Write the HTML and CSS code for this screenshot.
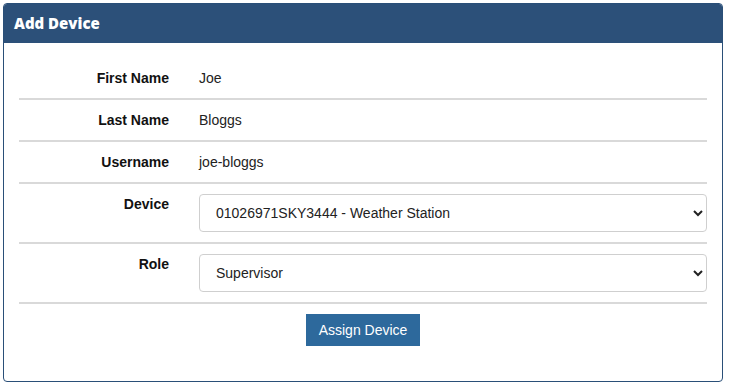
FILE: index.html
```html
<!DOCTYPE html>
<html lang="en">
<head>
    <meta charset="UTF-8">
    <meta name="viewport" content="width=device-width, initial-scale=1.0">
    <title>Add Device</title>
    <link rel="stylesheet" href="styles.css">
</head>
<body>
    <div class="card">
        <div class="card-header">Add Device</div>
        <div class="card-body">
            <form class="device-form">
                <div class="form-row">
                    <label class="form-label">First Name</label>
                    <div class="form-value">Joe</div>
                </div>
                <div class="form-row">
                    <label class="form-label">Last Name</label>
                    <div class="form-value">Bloggs</div>
                </div>
                <div class="form-row">
                    <label class="form-label">Username</label>
                    <div class="form-value">joe-bloggs</div>
                </div>
                <div class="form-row">
                    <label class="form-label" for="device">Device</label>
                    <div class="form-value">
                        <select id="device" class="form-select">
                            <option>01026971SKY3444 - Weather Station</option>
                        </select>
                    </div>
                </div>
                <div class="form-row">
                    <label class="form-label" for="role">Role</label>
                    <div class="form-value">
                        <select id="role" class="form-select">
                            <option>Supervisor</option>
                        </select>
                    </div>
                </div>
                <div class="form-actions">
                    <button type="button" class="btn-primary">Assign Device</button>
                </div>
            </form>
        </div>
    </div>
</body>
</html>
```

FILE: styles.css
```css
body {
    margin: 0;
    padding: 3px;
    background: #ffffff;
    font-family: "Liberation Sans", Arial, sans-serif;
    font-size: 14px;
    color: #222;
}

.card {
    width: 718px;
    border: 1px solid #2a4f78;
    border-radius: 4px;
    overflow: hidden;
}

.card-header {
    height: 39px;
    line-height: 39px;
    padding-left: 10px;
    background-color: #2c5079;
    color: #ffffff;
    font-family: "Open Sans", sans-serif;
    font-weight: 800;
    font-size: 15px;
}

.card-body {
    padding: 15px 15px 35px;
}

.form-row {
    display: flex;
    align-items: flex-start;
    padding: 10px 0;
    border-bottom: 2px solid #d9d9d9;
    line-height: 20px;
}

.form-label {
    width: 150px;
    text-align: right;
    font-weight: 700;
    color: #111;
}

.form-value {
    flex: 1;
    margin-left: 30px;
    color: #222;
}

.form-select {
    width: 100%;
    height: 38px;
    padding: 0 12px;
    border: 1px solid #cfcfcf;
    border-radius: 4px;
    background-color: #ffffff;
    font-family: "Liberation Sans", Arial, sans-serif;
    font-size: 14px;
    color: #222;
}

.form-actions {
    display: flex;
    justify-content: center;
    padding-top: 10px;
}

.btn-primary {
    height: 32px;
    padding: 0 13px;
    border: none;
    background-color: #2d699c;
    color: #ffffff;
    font-family: "Liberation Sans", Arial, sans-serif;
    font-size: 14px;
    cursor: pointer;
}
```
